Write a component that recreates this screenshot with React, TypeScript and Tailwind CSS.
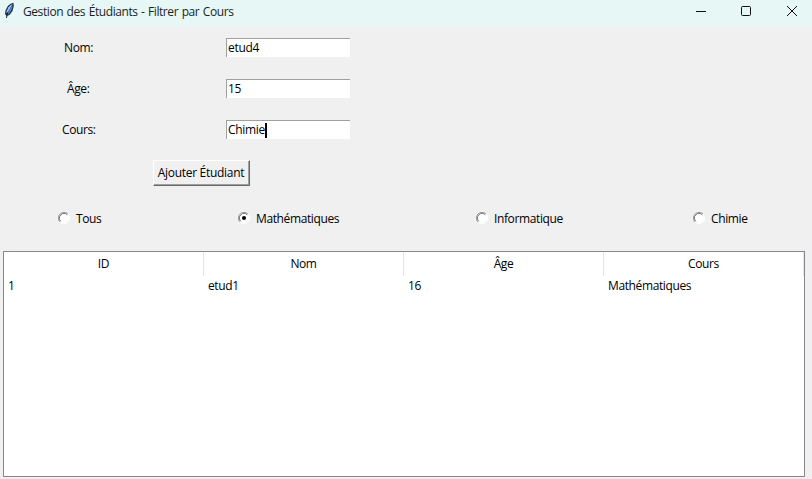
import React from "react";

const fields = [
  { label: "Nom:", value: "etud4", pad: "pl-[64px]" },
  { label: "Âge:", value: "15", pad: "pl-[67px]" },
  { label: "Cours:", value: "Chimie", pad: "pl-[62px]" },
];

const columns = ["ID", "Nom", "Âge", "Cours"];
const rows = [["1", "etud1", "16", "Mathématiques"]];

function Feather() {
  return (
    <svg width="12" height="18" viewBox="0 0 12 18" className="block">
      <path d="M9.5 1 7 1.5 3.8 4 1.5 8.5 1 12l1.5 2L5.5 13l3-4L9.8 4z" fill="#1d2a3c" />
      <path d="M8.6 2 7 2.8 4.5 5.3 2.6 9l-.4 2.6L4.5 9z" fill="#a3c8f5" />
      <path d="M8.6 2.8 8.4 5.2 7.2 8.6 4.8 12 3.4 12.4 5 8.4z" fill="#4a8be4" />
      <path d="M3.4 11 2.5 16" fill="none" stroke="#172234" strokeWidth="1" />
    </svg>
  );
}

function TitleBar() {
  return (
    <header className="flex h-[27px] items-start bg-[#e6f7f5]">
      <div className="ml-[4px] mt-[2px] w-[19px]">
        <Feather />
      </div>
      <h1 className="mt-[4px] w-[660px] whitespace-nowrap leading-4 tracking-[-0.42px] [word-spacing:0.8px] text-[#1b1f1f]">
        Gestion des Étudiants - Filtrer par Cours
      </h1>
      <svg width="120" height="24" viewBox="683 0 120 24" fill="none" stroke="#111" className="block">
        <path d="M696 11.5h10" />
        <rect x="741.5" y="6.5" width="9" height="9" rx="1" />
        <path d="m787 6 10 10m0-10-10 10" />
      </svg>
    </header>
  );
}

function Radio({ label, checked, width }: { label: string; checked?: boolean; width: string }) {
  return (
    <div className={`flex items-center ${width}`}>
      <svg width="12" height="12" viewBox="0 0 12 12" fill="none" className="mr-[6px] mt-[-2px] block">
        <circle cx="6" cy="6" r="5" fill="#fff" />
        <path d="M2 10A5.6 5.6 0 0 1 10 2" stroke="#a0a0a0" />
        <path d="M2.7 9.2A4.6 4.6 0 0 1 9.2 2.7" stroke="#696969" />
        <path d="M10 2A5.6 5.6 0 0 1 2 10" stroke="#fff" />
        {checked && <circle cx="6" cy="6" r="2" fill="#000" />}
      </svg>
      <span className="whitespace-nowrap">{label}</span>
    </div>
  );
}

export default function App() {
  return (
    <div className="h-[479px] w-[812px] overflow-hidden bg-[#f0f0f0] font-['Open_Sans','Noto_Sans',sans-serif] text-[12px] leading-4 tracking-[-0.38px] text-black">
      <TitleBar />
      <form className="flex flex-col gap-[22px] pt-[11px]">
        {fields.map((f, i) => (
          <div key={f.label} className="flex h-[19px] items-center">
            <label className={`w-[226px] ${f.pad}`}>{f.label}</label>
            <div className="flex h-[19px] w-[124px] items-center border-l border-t border-[#a0a0a0] bg-white pl-[1px]">
              <span className="tracking-[-0.3px]">{f.value}</span>
              {i === 2 && <span className="h-[15px] w-[2px] bg-black" />}
            </div>
          </div>
        ))}
      </form>
      <button
        type="button"
        className="ml-[153px] mt-[21px] flex h-[26px] w-[97px] items-center justify-center border border-b-[#696969] border-l-white border-r-[#696969] border-t-white bg-[#f0f0f0] pr-px shadow-[inset_-1px_-1px_0_#a0a0a0]"
      >
        <span className="whitespace-nowrap tracking-[-0.3px]">Ajouter Étudiant</span>
      </button>
      <div className="mt-[25px] flex h-4 pl-[58px]">
        <Radio label="Tous" width="w-[180px]" />
        <Radio label="Mathématiques" checked width="w-[238px]" />
        <Radio label="Informatique" width="w-[217px]" />
        <Radio label="Chimie" width="w-[100px]" />
      </div>
      <section className="ml-[3px] mt-[24px] h-[226px] w-[802px] border border-[#828790] bg-white">
        <div className="flex h-[24px]">
          {columns.map((c) => (
            <div key={c} className="flex w-[200px] items-center justify-center border-r border-[#e5e5e5]">
              {c}
            </div>
          ))}
        </div>
        {rows.map((r) => (
          <div key={r[0]} className="flex h-[20px] items-center">
            {r.map((cell, i) => (
              <div key={i} className="w-[200px] pl-[4px]">{cell}</div>
            ))}
          </div>
        ))}
      </section>
    </div>
  );
}
